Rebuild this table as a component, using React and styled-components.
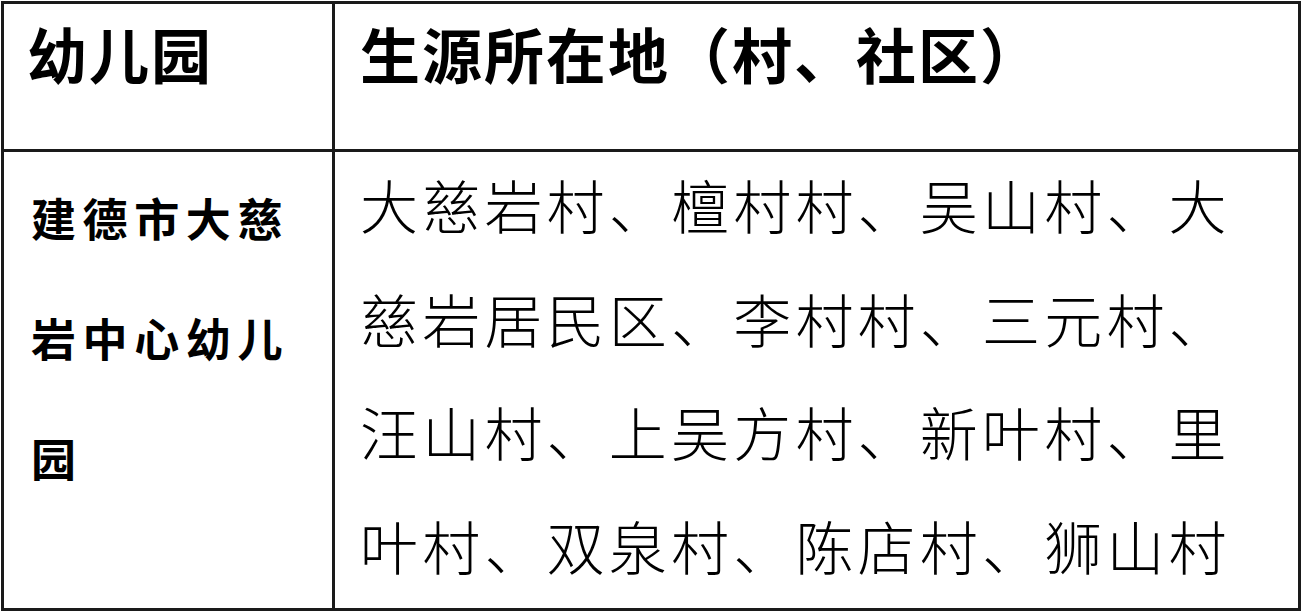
import React from "react";
import styled, { createGlobalStyle } from "styled-components";

const GlobalStyle = createGlobalStyle`
    html, body {
        margin: 0;
        padding: 0;
        background: #ffffff;
    }
    body {
        font-family: "Noto Sans CJK SC", "Noto Sans", sans-serif;
        color: #000;
    }
`

const rows = [
    {
        school: "建德市大慈岩中心幼儿园",
        source: "大慈岩村、檀村村、吴山村、大慈岩居民区、李村村、三元村、汪山村、上吴方村、新叶村、里叶村、双泉村、陈店村、狮山村"
    }
]

const App = () => {
    return (
        <>
            <GlobalStyle />
            <Page>
                <Table>
                    <HeadCell $first>幼儿园</HeadCell>
                    <HeadCell>生源所在地（村、社区）</HeadCell>
                    {rows.map((row) => (
                        <React.Fragment key={row.school}>
                            <SchoolCell>{row.school}</SchoolCell>
                            <SourceCell>
                                <SourceText>{row.source}</SourceText>
                            </SourceCell>
                        </React.Fragment>
                    ))}
                </Table>
            </Page>
        </>
    )
}

const Page = styled.div`
    padding: 1px 0 0 1px;
    width: 1304px;
    height: 613px;
    box-sizing: border-box;
    overflow: hidden;
`

const Table = styled.div`
    display: grid;
    grid-template-columns: 331px 1fr;
    grid-template-rows: 148px 1fr;
    width: 1300px;
    height: 610px;
    box-sizing: border-box;
    border: 3px solid #1a1a1a;
`

const Cell = styled.div`
    box-sizing: border-box;
    border-right: ${props => props.$first ? "3px solid #1a1a1a" : "none"};
`

const HeadCell = styled(Cell)`
    border-bottom: 3px solid #1a1a1a;
    padding: 18px 0 0 ${props => props.$first ? "23px" : "25px"};
    font-size: 60px;
    font-weight: 700;
    line-height: 62px;
    letter-spacing: 2px;
    white-space: nowrap;
`

const SchoolCell = styled(Cell)`
    border-right: 3px solid #1a1a1a;
    padding: 6px 16px 0 27px;
    font-size: 45px;
    font-weight: 700;
    line-height: 120px;
    letter-spacing: 6.6px;
`

const SourceCell = styled(Cell)`
    padding: 0 20px 0 25px;
    overflow: hidden;
`

const SourceText = styled.p`
    margin: -4px 0 0;
    font-size: 58px;
    font-weight: 300;
    line-height: 113.7px;
    letter-spacing: 4.2px;
    line-break: strict;
`

export default App
